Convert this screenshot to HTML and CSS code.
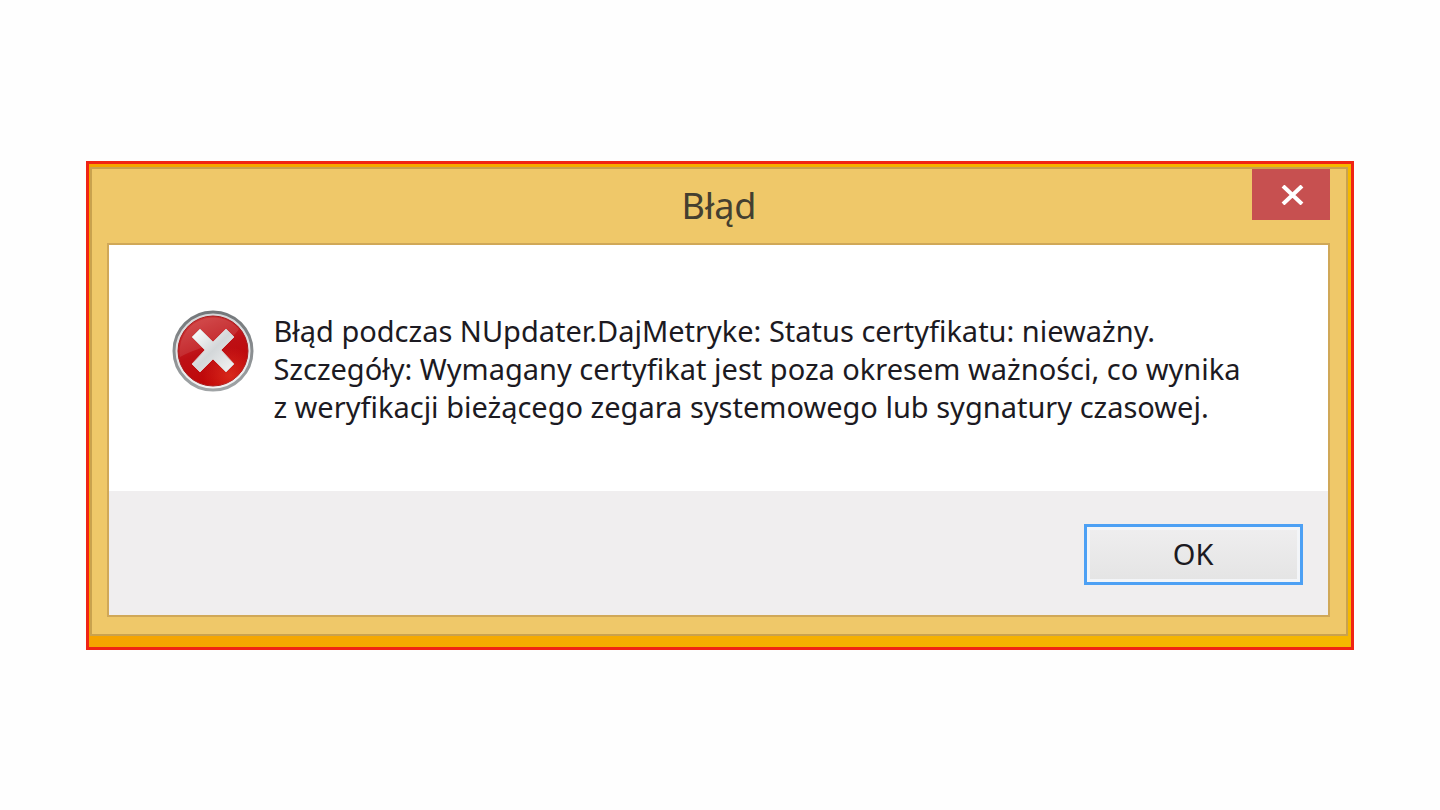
FILE: index.html
```html
<!DOCTYPE html>
<html lang="pl">
<head>
    <meta charset="UTF-8">
    <meta name="viewport" content="width=device-width, initial-scale=1.0">
    <title>Błąd</title>
    <link rel="stylesheet" href="styles.css">
</head>
<body>

    <div class="frame">
        <div class="window" role="alertdialog" aria-labelledby="title" aria-describedby="message">

            <!-- Title bar -->
            <header class="title-bar">
                <h1 class="title" id="title">Błąd</h1>
                <button class="close-btn" type="button" aria-label="Zamknij">
                    <svg width="24" height="20" viewBox="0 0 24 20">
                        <path d="M3 1 L22 19 M22 1 L3 19" stroke="#ffffff" stroke-width="4" fill="none"/>
                    </svg>
                </button>
            </header>

            <div class="content">
                <div class="message-area">
                    <svg class="error-icon" width="82" height="82" viewBox="0 0 82 82" aria-hidden="true">
                        <defs>
                            <linearGradient id="ring" x1="0" y1="0" x2="0" y2="1">
                                <stop offset="0" stop-color="#73777a"/>
                                <stop offset="1" stop-color="#a0a4a6"/>
                            </linearGradient>
                            <linearGradient id="rim" x1="0" y1="0" x2="0" y2="1">
                                <stop offset="0" stop-color="#d4d6d8"/>
                                <stop offset="1" stop-color="#f2f2f2"/>
                            </linearGradient>
                            <linearGradient id="red" x1="0.2" y1="0" x2="0.6" y2="1">
                                <stop offset="0" stop-color="#cf3c3c"/>
                                <stop offset="0.5" stop-color="#bd1015"/>
                                <stop offset="1" stop-color="#c00404"/>
                            </linearGradient>
                            <radialGradient id="glow" cx="0.75" cy="0.85" r="0.4">
                                <stop offset="0" stop-color="#f04a30" stop-opacity="0.5"/>
                                <stop offset="1" stop-color="#f04a30" stop-opacity="0"/>
                            </radialGradient>
                            <linearGradient id="cross" x1="0" y1="0" x2="1" y2="1">
                                <stop offset="0" stop-color="#ffffff"/>
                                <stop offset="0.5" stop-color="#d3d7d9"/>
                                <stop offset="1" stop-color="#f4f4f4"/>
                            </linearGradient>
                        </defs>
                        <circle cx="41" cy="41" r="39" fill="url(#rim)" stroke="url(#ring)" stroke-width="3"/>
                        <circle cx="41" cy="41" r="35" fill="url(#red)" stroke="#a81a1c" stroke-width="1"/>
                        <circle cx="41" cy="41" r="35" fill="url(#glow)"/>
                        <path d="M8 47 A34 34 0 0 1 67 19 C62 27 55 31 44 34 C30 37 20 41 8 47 Z" fill="#ffffff" opacity="0.1"/>
                        <path d="M28 19 L41 32 L54 19 L62 27 L49 40 L62 54 L54 62 L41 49 L28 62 L20 54 L33 40 L20 27 Z" fill="url(#cross)" stroke="#d8c8c8" stroke-width="1" stroke-linejoin="round"/>
                    </svg>
                    <p class="message" id="message">
                        Błąd podczas NUpdater.DajMetryke: Status certyfikatu: nieważny.<br>
                        Szczegóły: Wymagany certyfikat jest poza okresem ważności, co wynika<br>
                        z weryfikacji bieżącego zegara systemowego lub sygnatury czasowej.
                    </p>
                </div>

                <footer class="actions">
                    <button class="ok-btn" type="button">OK</button>
                </footer>
            </div>

        </div>
    </div>

</body>
</html>
```

FILE: styles.css
```css
* {
    box-sizing: border-box;
}

body {
    margin: 0;
    min-height: 100vh;
    display: flex;
    align-items: center;
    justify-content: center;
    background-color: #fefefe;
    font-family: "Noto Sans", "Open Sans", sans-serif;
    color: #1c1a22;
}

.frame {
    width: 88%;
    padding: 3px 3px 11px 1px;
    border: 3px solid #f02414;
    background: linear-gradient(to right, #f5a400, #f5b800);
}

.window {
    border: 2px solid #c9a24e;
    background: #efc869;
}

/* Title bar */
.title-bar {
    display: grid;
    grid-template-columns: 1fr auto 1fr;
    align-items: center;
    height: 74px;
    padding: 0 16px;
}

.title {
    grid-column: 2;
    margin: 0;
    font-size: 36px;
    font-weight: normal;
    line-height: 74px;
    color: #443f30;
}

.close-btn {
    justify-self: end;
    align-self: start;
    display: flex;
    align-items: center;
    justify-content: center;
    width: 78px;
    height: 51px;
    padding: 2px 0 0 2px;
    border: none;
    background: #c75050;
    cursor: pointer;
}

/* Content */
.content {
    margin: 0 16px 17px 15px;
    border: 2px solid #d0a858;
    background: #ffffff;
}

.message-area {
    display: flex;
    align-items: flex-start;
    gap: 19px;
    min-height: 246px;
    padding: 65px 24px 60px 63px;
}

.error-icon {
    flex-shrink: 0;
}

.message {
    margin: 0;
    padding-top: 2px;
    font-size: 29px;
    line-height: 38px;
    white-space: nowrap;
}

.actions {
    display: flex;
    justify-content: flex-end;
    padding: 33px 25px 30px;
    background: #f0eeef;
}

.ok-btn {
    width: 219px;
    height: 61px;
    padding: 0 0 2px;
    border: 3px solid #4da0f4;
    background: linear-gradient(#efeeef, #e4e4e4);
    box-shadow: inset 0 0 0 3px #f3f5f8;
    font-family: inherit;
    font-size: 29px;
    color: #1c1a22;
    cursor: pointer;
}
```
